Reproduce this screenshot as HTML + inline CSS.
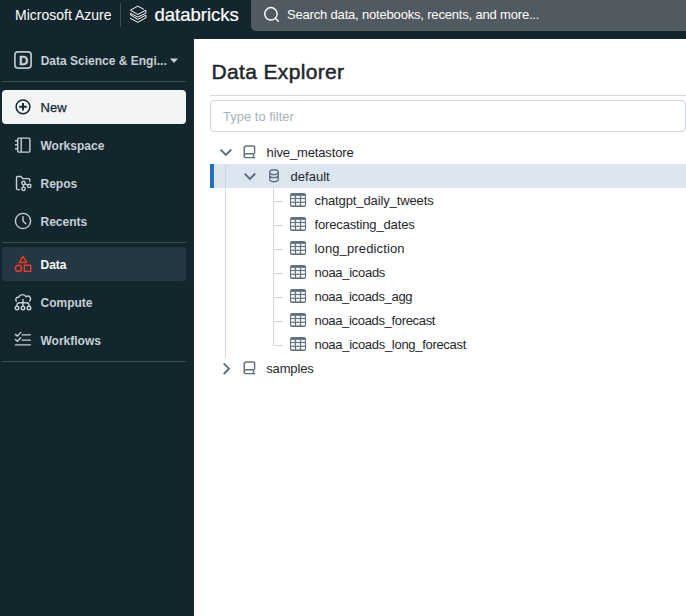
<!DOCTYPE html>
<html><head><meta charset="utf-8">
<style>
*{margin:0;padding:0;box-sizing:border-box}
html,body{width:686px;height:616px;overflow:hidden;background:#fff;font-family:"Liberation Sans",sans-serif}
.a{position:absolute;white-space:pre}
#top{position:absolute;left:0;top:0;width:686px;height:39px;background:#13262e}
#side{position:absolute;left:0;top:38px;width:194px;height:578px;background:#13262e}
#content{position:absolute;left:194px;top:39px;width:492px;height:577px;background:#fff}
.st{font-weight:bold;font-size:12px;line-height:12px;color:#c5d0d6}
.tt{font-size:13px;line-height:13px;color:#1f272d}
svg{position:absolute;left:0;top:0}
</style></head>
<body>
<div id="top"></div>
<div id="side"></div>
<div id="content"></div>
<!-- top bar text -->
<div class="a" style="left:15px;top:8.2px;font-size:14px;line-height:14px;color:#fff">Microsoft Azure</div>
<div class="a" style="left:154.5px;top:5.9px;font-size:18.5px;line-height:18.5px;color:#fff;-webkit-text-stroke:0.2px #fff">databricks</div>
<div style="position:absolute;left:251px;top:-4px;width:440px;height:34.5px;background:#505a60;border-radius:5px"></div>
<div class="a" style="left:287px;top:8.1px;font-size:13px;line-height:13px;color:#fff;letter-spacing:-0.18px">Search data, notebooks, recents, and more...</div>
<!-- sidebar -->
<div style="position:absolute;left:2px;top:81px;width:184px;height:1px;background:#3c4d55"></div>
<div style="position:absolute;left:2px;top:90px;width:184px;height:34px;background:#f2f4f6;border-radius:4px"></div>
<div style="position:absolute;left:2px;top:247px;width:184px;height:34px;background:#233842;border-radius:4px"></div>
<div style="position:absolute;left:2px;top:242px;width:184px;height:1px;background:#3c4d55"></div>
<div style="position:absolute;left:2px;top:361px;width:184px;height:1px;background:#3c4d55"></div>
<div class="a st" style="left:18.9px;top:54.4px;font-size:13px;line-height:13px;color:#c8d3d9;-webkit-text-stroke:0.3px #c8d3d9">D</div>
<div class="a st" style="left:40.7px;top:54.8px">Data Science &amp; Engi...</div>
<div class="a" style="left:40.6px;top:101px;font-size:13px;line-height:13px;color:#13262e;-webkit-text-stroke:0.25px #13262e">New</div>
<div class="a st" style="left:40.5px;top:140.2px">Workspace</div>
<div class="a st" style="left:40.5px;top:178.2px">Repos</div>
<div class="a st" style="left:40.5px;top:216.2px">Recents</div>
<div class="a st" style="left:40.5px;top:259.2px;color:#fff">Data</div>
<div class="a st" style="left:40.5px;top:297.2px">Compute</div>
<div class="a st" style="left:40.5px;top:335.2px">Workflows</div>
<!-- content -->
<div class="a" style="left:211.5px;top:61px;font-size:21px;line-height:21px;color:#1f272d;letter-spacing:0.35px;-webkit-text-stroke:0.5px #1f272d">Data Explorer</div>
<div style="position:absolute;left:210px;top:95px;width:476px;height:1px;background:#d1d9e1"></div>
<div style="position:absolute;left:210px;top:100px;width:476px;height:32px;border:1px solid #cbd5de;border-radius:4px"></div>
<div class="a tt" style="left:223px;top:110px;color:#a9b3bb">Type to filter</div>
<div style="position:absolute;left:210px;top:164px;width:476px;height:24px;background:#dbe6f0"></div>
<div style="position:absolute;left:210px;top:164px;width:4px;height:24px;background:#2272b4"></div>
<div class="a tt" style="left:266.6px;top:146px;letter-spacing:-0.14px">hive_metastore</div>
<div class="a tt" style="left:290.6px;top:170px">default</div>
<div class="a tt" style="left:314.5px;top:194px;letter-spacing:-0.12px">chatgpt_daily_tweets</div>
<div class="a tt" style="left:314.5px;top:218px;letter-spacing:-0.15px">forecasting_dates</div>
<div class="a tt" style="left:314.5px;top:242px;letter-spacing:0.13px">long_prediction</div>
<div class="a tt" style="left:314.5px;top:266px;letter-spacing:-0.29px">noaa_icoads</div>
<div class="a tt" style="left:314.5px;top:290px;letter-spacing:-0.33px">noaa_icoads_agg</div>
<div class="a tt" style="left:314.5px;top:314px;letter-spacing:-0.33px">noaa_icoads_forecast</div>
<div class="a tt" style="left:314.5px;top:338px;letter-spacing:-0.3px">noaa_icoads_long_forecast</div>
<div class="a tt" style="left:266.2px;top:362px;letter-spacing:-0.13px">samples</div>
<svg width="686" height="616" viewBox="0 0 686 616">
<!-- divider -->
<rect x="120" y="3" width="1" height="24" fill="#3f4f57"/>
<!-- databricks logo -->
<g fill="none" stroke="#fff" stroke-width="1" stroke-linejoin="round" stroke-linecap="round">
<path d="M143.5 9.2 L137.8 6.1 L130.4 10.2 L137.8 14.5 L145.9 10.2 V13.1 L137.8 17.1 L130.5 13.3 V14.9 L137.8 19.4 L145.9 15.1 V17.8 L137.8 22.3 L130.4 18.3"/>
</g>
<!-- search icon -->
<g fill="none" stroke="#fff" stroke-width="1.5" stroke-linecap="round">
<circle cx="270.9" cy="13.8" r="6.2"/>
<path d="M275.4 18.3 L278.3 21.2"/>
</g>
<!-- D workspace icon -->
<rect x="14.9" y="51.9" width="16.2" height="16.2" rx="3" fill="none" stroke="#bcc7ce" stroke-width="1.7"/>
<!-- caret -->
<path d="M170 58.5 H178 L174 63 Z" fill="#c5d0d6"/>
<!-- plus icon -->
<g fill="none" stroke="#13262e" stroke-width="1.5">
<circle cx="23" cy="106.8" r="6.9"/>
<path d="M23 103.1 V110.5 M19.3 106.8 H26.7" stroke-width="1.9"/>
</g>
<!-- workspace icon -->
<g fill="none" stroke="#c5d0d6" stroke-width="1.4">
<rect x="17.7" y="138.1" width="12.2" height="14" rx="1"/>
<path d="M21.2 138.1 V152.1 M15 140.7 H17.7 M15 144.7 H17.7 M15 148.8 H17.7"/>
</g>
<!-- repos icon -->
<g fill="none" stroke="#c5d0d6" stroke-width="1.4" stroke-linecap="round" stroke-linejoin="round">
<path d="M19.5 189.6 H17.5 Q16.5 189.6 16.5 188.6 V177.5 Q16.5 176.5 17.5 176.5 H20.9 L22.7 178.6 H28.7 Q29.7 178.6 29.7 179.6 V181.3"/>
<circle cx="23.5" cy="182.9" r="1.7"/>
<circle cx="23.5" cy="188.8" r="1.7"/>
<circle cx="29.3" cy="185.9" r="1.7"/>
<path d="M23.5 184.6 V187.1 M25.1 183.8 L27.7 185.1"/>
</g>
<!-- recents clock -->
<g fill="none" stroke="#c5d0d6" stroke-width="1.4" stroke-linecap="round" stroke-linejoin="round">
<circle cx="23" cy="221" r="7.6"/>
<path d="M23 216.6 V221 L25.8 223.7"/>
</g>
<!-- data icon -->
<g fill="none" stroke="#ff3621" stroke-width="1.4" stroke-linejoin="round">
<path d="M23 256.4 L26.6 262.5 H19.4 Z"/>
<circle cx="18.5" cy="268.4" r="3.1"/>
<rect x="24.4" y="265.3" width="6.3" height="6.1"/>
</g>
<!-- compute icon -->
<g fill="none" stroke="#c5d0d6" stroke-width="1.4" stroke-linecap="round" stroke-linejoin="round">
<path d="M16.3 301 A2.3 2.3 0 0 1 18.6 297.3 A4.2 4.2 0 0 1 26.2 296.8 A2.4 2.4 0 0 1 29.6 301"/>
<path d="M23 299.5 V306.2"/>
<path d="M17 306.2 V305.2 Q17 302.8 19.4 302.8 H26.6 Q29 302.8 29 305.2 V306.2"/>
<circle cx="17" cy="308" r="1.8"/>
<circle cx="23" cy="308" r="1.8"/>
<circle cx="29" cy="308" r="1.8"/>
</g>
<!-- workflows icon -->
<g fill="none" stroke="#c5d0d6" stroke-width="1.4" stroke-linecap="round" stroke-linejoin="round">
<path d="M15.4 334.4 L17.4 336.1 L20.75 332.4"/>
<path d="M15.4 339.4 L17.4 341.3 L20.75 337.75"/>
<path d="M22.2 334.9 H30.4 M22.2 340.1 H30.4 M15.4 344.9 H30.4"/>
</g>
<!-- tree chevrons -->
<g fill="none" stroke="#566c7d" stroke-width="1.8" stroke-linecap="butt" stroke-linejoin="miter">
<path d="M220.6 149.6 L225.9 154.9 L231.3 149.5"/>
<path d="M244.6 173.6 L249.9 178.9 L255.3 173.5"/>
<path d="M223.7 363.4 L229 368.7 L223.7 374"/>
</g>
<!-- book icons -->
<g fill="none" stroke="#5f7281" stroke-width="1.45" stroke-linecap="butt" stroke-linejoin="round">
<path d="M244.2 156 V148.4 Q244.2 145.9 246.7 145.9 H253.4 Q254.6 145.9 254.6 147.1 V152.5 Q254.6 153.7 253.4 153.7 H246.4 Q244.2 153.7 244.2 155.7 Q244.2 157.6 246.2 157.6 H255.2 M253.6 153.7 V157.6"/>
<path d="M244.2 372 V364.4 Q244.2 361.9 246.7 361.9 H253.4 Q254.6 361.9 254.6 363.1 V368.5 Q254.6 369.7 253.4 369.7 H246.4 Q244.2 369.7 244.2 371.7 Q244.2 373.6 246.2 373.6 H255.2 M253.6 369.7 V373.6"/>
</g>
<!-- database icon -->
<g fill="none" stroke="#5f7281" stroke-width="1.4">
<ellipse cx="274" cy="172.2" rx="4.3" ry="2.4"/>
<path d="M269.7 172.2 V179.3 A4.3 2.4 0 0 0 278.3 179.3 V172.2 M269.7 175.2 A4.3 2.4 0 0 0 278.3 175.2"/>
</g>
<!-- guides -->
<g stroke="#cdd7df" stroke-width="1" fill="none">
<path d="M225.5 164 V358" stroke="#cbd8e3"/>
<path d="M273.5 188 V345.5" stroke="#d6d6d6"/>
</g>
<!-- tables -->
<g>
<path d="M273.5 201.5 H283" stroke="#d6d6d6" stroke-width="1"/>
<rect x="290" y="193" width="16" height="14" rx="1.8" fill="#5f7281"/>
<rect x="291.1" y="195.9" width="3.7" height="2.0" fill="#fff"/>
<rect x="291.1" y="199.1" width="3.7" height="2.6" fill="#fff"/>
<rect x="291.1" y="202.9" width="3.7" height="2.5" fill="#fff"/>
<rect x="296.1" y="195.9" width="3.8" height="2.0" fill="#fff"/>
<rect x="296.1" y="199.1" width="3.8" height="2.6" fill="#fff"/>
<rect x="296.1" y="202.9" width="3.8" height="2.5" fill="#fff"/>
<rect x="301.1" y="195.9" width="3.8" height="2.0" fill="#fff"/>
<rect x="301.1" y="199.1" width="3.8" height="2.6" fill="#fff"/>
<rect x="301.1" y="202.9" width="3.8" height="2.5" fill="#fff"/>
<path d="M273.5 225.5 H283" stroke="#d6d6d6" stroke-width="1"/>
<rect x="290" y="217" width="16" height="14" rx="1.8" fill="#5f7281"/>
<rect x="291.1" y="219.9" width="3.7" height="2.0" fill="#fff"/>
<rect x="291.1" y="223.1" width="3.7" height="2.6" fill="#fff"/>
<rect x="291.1" y="226.9" width="3.7" height="2.5" fill="#fff"/>
<rect x="296.1" y="219.9" width="3.8" height="2.0" fill="#fff"/>
<rect x="296.1" y="223.1" width="3.8" height="2.6" fill="#fff"/>
<rect x="296.1" y="226.9" width="3.8" height="2.5" fill="#fff"/>
<rect x="301.1" y="219.9" width="3.8" height="2.0" fill="#fff"/>
<rect x="301.1" y="223.1" width="3.8" height="2.6" fill="#fff"/>
<rect x="301.1" y="226.9" width="3.8" height="2.5" fill="#fff"/>
<path d="M273.5 249.5 H283" stroke="#d6d6d6" stroke-width="1"/>
<rect x="290" y="241" width="16" height="14" rx="1.8" fill="#5f7281"/>
<rect x="291.1" y="243.9" width="3.7" height="2.0" fill="#fff"/>
<rect x="291.1" y="247.1" width="3.7" height="2.6" fill="#fff"/>
<rect x="291.1" y="250.9" width="3.7" height="2.5" fill="#fff"/>
<rect x="296.1" y="243.9" width="3.8" height="2.0" fill="#fff"/>
<rect x="296.1" y="247.1" width="3.8" height="2.6" fill="#fff"/>
<rect x="296.1" y="250.9" width="3.8" height="2.5" fill="#fff"/>
<rect x="301.1" y="243.9" width="3.8" height="2.0" fill="#fff"/>
<rect x="301.1" y="247.1" width="3.8" height="2.6" fill="#fff"/>
<rect x="301.1" y="250.9" width="3.8" height="2.5" fill="#fff"/>
<path d="M273.5 273.5 H283" stroke="#d6d6d6" stroke-width="1"/>
<rect x="290" y="265" width="16" height="14" rx="1.8" fill="#5f7281"/>
<rect x="291.1" y="267.9" width="3.7" height="2.0" fill="#fff"/>
<rect x="291.1" y="271.1" width="3.7" height="2.6" fill="#fff"/>
<rect x="291.1" y="274.9" width="3.7" height="2.5" fill="#fff"/>
<rect x="296.1" y="267.9" width="3.8" height="2.0" fill="#fff"/>
<rect x="296.1" y="271.1" width="3.8" height="2.6" fill="#fff"/>
<rect x="296.1" y="274.9" width="3.8" height="2.5" fill="#fff"/>
<rect x="301.1" y="267.9" width="3.8" height="2.0" fill="#fff"/>
<rect x="301.1" y="271.1" width="3.8" height="2.6" fill="#fff"/>
<rect x="301.1" y="274.9" width="3.8" height="2.5" fill="#fff"/>
<path d="M273.5 297.5 H283" stroke="#d6d6d6" stroke-width="1"/>
<rect x="290" y="289" width="16" height="14" rx="1.8" fill="#5f7281"/>
<rect x="291.1" y="291.9" width="3.7" height="2.0" fill="#fff"/>
<rect x="291.1" y="295.1" width="3.7" height="2.6" fill="#fff"/>
<rect x="291.1" y="298.9" width="3.7" height="2.5" fill="#fff"/>
<rect x="296.1" y="291.9" width="3.8" height="2.0" fill="#fff"/>
<rect x="296.1" y="295.1" width="3.8" height="2.6" fill="#fff"/>
<rect x="296.1" y="298.9" width="3.8" height="2.5" fill="#fff"/>
<rect x="301.1" y="291.9" width="3.8" height="2.0" fill="#fff"/>
<rect x="301.1" y="295.1" width="3.8" height="2.6" fill="#fff"/>
<rect x="301.1" y="298.9" width="3.8" height="2.5" fill="#fff"/>
<path d="M273.5 321.5 H283" stroke="#d6d6d6" stroke-width="1"/>
<rect x="290" y="313" width="16" height="14" rx="1.8" fill="#5f7281"/>
<rect x="291.1" y="315.9" width="3.7" height="2.0" fill="#fff"/>
<rect x="291.1" y="319.1" width="3.7" height="2.6" fill="#fff"/>
<rect x="291.1" y="322.9" width="3.7" height="2.5" fill="#fff"/>
<rect x="296.1" y="315.9" width="3.8" height="2.0" fill="#fff"/>
<rect x="296.1" y="319.1" width="3.8" height="2.6" fill="#fff"/>
<rect x="296.1" y="322.9" width="3.8" height="2.5" fill="#fff"/>
<rect x="301.1" y="315.9" width="3.8" height="2.0" fill="#fff"/>
<rect x="301.1" y="319.1" width="3.8" height="2.6" fill="#fff"/>
<rect x="301.1" y="322.9" width="3.8" height="2.5" fill="#fff"/>
<path d="M273.5 345.5 H283" stroke="#d6d6d6" stroke-width="1"/>
<rect x="290" y="337" width="16" height="14" rx="1.8" fill="#5f7281"/>
<rect x="291.1" y="339.9" width="3.7" height="2.0" fill="#fff"/>
<rect x="291.1" y="343.1" width="3.7" height="2.6" fill="#fff"/>
<rect x="291.1" y="346.9" width="3.7" height="2.5" fill="#fff"/>
<rect x="296.1" y="339.9" width="3.8" height="2.0" fill="#fff"/>
<rect x="296.1" y="343.1" width="3.8" height="2.6" fill="#fff"/>
<rect x="296.1" y="346.9" width="3.8" height="2.5" fill="#fff"/>
<rect x="301.1" y="339.9" width="3.8" height="2.0" fill="#fff"/>
<rect x="301.1" y="343.1" width="3.8" height="2.6" fill="#fff"/>
<rect x="301.1" y="346.9" width="3.8" height="2.5" fill="#fff"/>
</g>
</svg>
</body></html>
